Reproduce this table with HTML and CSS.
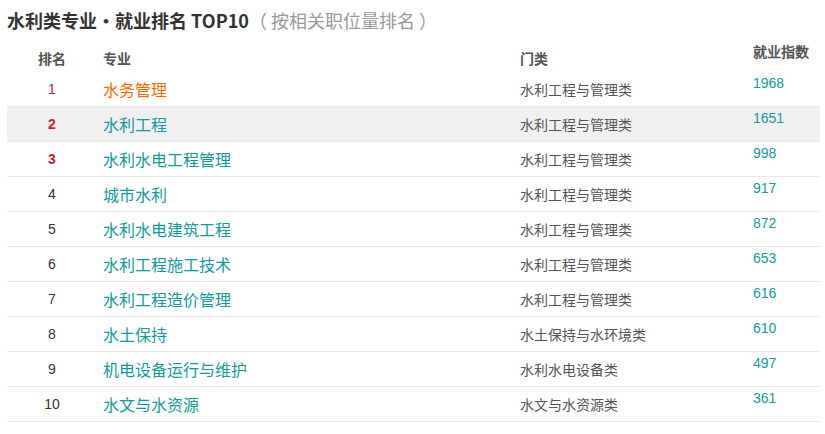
FILE: index.html
```html
<!DOCTYPE html>
<html lang="zh-CN">
<head>
<meta charset="utf-8">
<title>水利类专业就业排名</title>
<link rel="stylesheet" href="styles.css">
</head>
<body>
<div class="wrap">
  <h2 class="title">水利类专业・就业排名 TOP10<span class="sub">（ 按相关职位量排名 ）</span></h2>
  <div class="table">
    <div class="row head">
      <div class="c rank">排名</div>
      <div class="c major">专业</div>
      <div class="c cat">门类</div>
      <div class="c idx">就业指数</div>
    </div>
    <div class="row"><div class="c rank top">1</div><div class="c major first">水务管理</div><div class="c cat">水利工程与管理类</div><div class="c idx">1968</div></div>
    <div class="row hover"><div class="c rank top b">2</div><div class="c major">水利工程</div><div class="c cat">水利工程与管理类</div><div class="c idx">1651</div></div>
    <div class="row"><div class="c rank top b">3</div><div class="c major">水利水电工程管理</div><div class="c cat">水利工程与管理类</div><div class="c idx">998</div></div>
    <div class="row"><div class="c rank">4</div><div class="c major">城市水利</div><div class="c cat">水利工程与管理类</div><div class="c idx">917</div></div>
    <div class="row"><div class="c rank">5</div><div class="c major">水利水电建筑工程</div><div class="c cat">水利工程与管理类</div><div class="c idx">872</div></div>
    <div class="row"><div class="c rank">6</div><div class="c major">水利工程施工技术</div><div class="c cat">水利工程与管理类</div><div class="c idx">653</div></div>
    <div class="row"><div class="c rank">7</div><div class="c major">水利工程造价管理</div><div class="c cat">水利工程与管理类</div><div class="c idx">616</div></div>
    <div class="row"><div class="c rank">8</div><div class="c major">水土保持</div><div class="c cat">水土保持与水环境类</div><div class="c idx">610</div></div>
    <div class="row"><div class="c rank">9</div><div class="c major">机电设备运行与维护</div><div class="c cat">水利水电设备类</div><div class="c idx">497</div></div>
    <div class="row"><div class="c rank">10</div><div class="c major">水文与水资源</div><div class="c cat">水文与水资源类</div><div class="c idx">361</div></div>
  </div>
</div>
</body>
</html>
```
FILE: styles.css
```css
html, body {
  margin: 0;
  padding: 0;
  background: #fff;
}
body {
  font-family: "Noto Sans CJK SC", "Liberation Sans", sans-serif;
  color: #333;
}
.wrap {
  padding: 0 5px 0 7px;
}
.title {
  margin: 0;
  height: 40px;
  line-height: 40px;
  font-size: 18px;
  font-weight: bold;
  color: #333;
  white-space: pre;
}
.title .sub {
  font-weight: normal;
  color: #999;
}
.table {
  display: flex;
  flex-direction: column;
}
.row {
  display: grid;
  grid-template-columns: 90px 417px 233px 1fr;
  height: 35px;
  box-sizing: border-box;
  border-bottom: 1px solid #e9e9e9;
  align-items: center;
}
.row.hover {
  background: #f0f0f0;
}
.row.head {
  height: 32px;
  border-bottom: none;
}
.head .c {
  font-size: 14px;
  font-weight: bold;
  color: #555;
  line-height: 18px;
}
.head .rank, .head .major, .head .cat {
  padding-top: 4px;
}
.head .idx {
  align-self: start;
  padding-top: 3px;
}
.c {
  font-size: 14px;
  line-height: 18px;
  white-space: nowrap;
}
.rank {
  text-align: center;
  font-family: "Liberation Sans", "Noto Sans CJK SC", sans-serif;
  color: #333;
}
.head .rank {
  font-family: "Noto Sans CJK SC", sans-serif;
}
.rank.top {
  color: #c8202f;
}
.rank.b {
  font-weight: bold;
}
.major {
  padding-left: 6px;
  font-size: 16px;
  color: #139a9c;
}
.major.first {
  color: #ff6a00;
}
.cat {
  padding-left: 6px;
  color: #555;
}
.idx {
  padding-left: 6px;
  align-self: start;
  padding-top: 2px;
  font-family: "Liberation Sans", sans-serif;
  color: #139a9c;
}
```
